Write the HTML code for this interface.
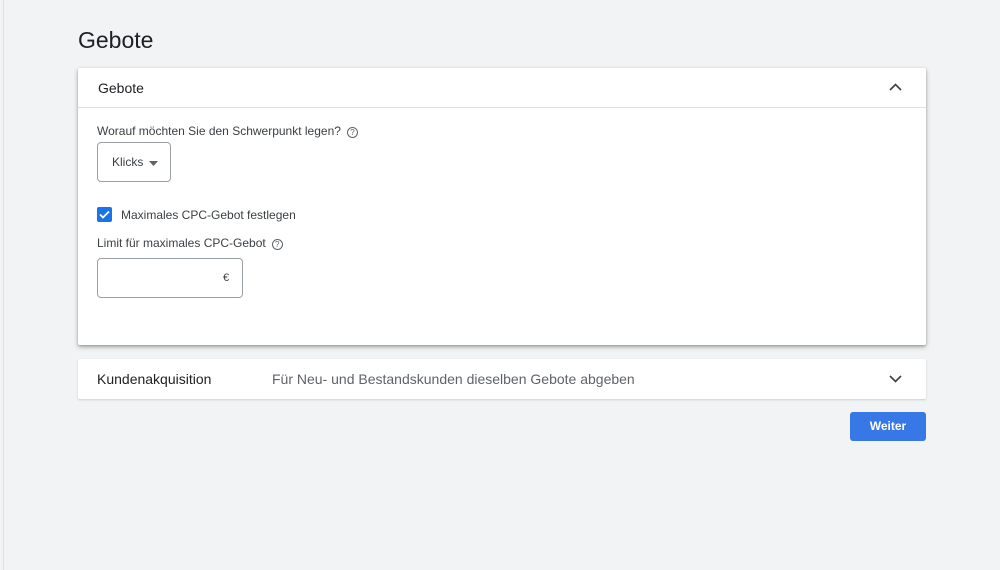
<!DOCTYPE html>
<html><head><meta charset="utf-8"><style>
*{box-sizing:border-box;margin:0;padding:0}
body{width:1000px;height:570px;background:#f1f3f4;font-family:"Liberation Sans",Arial,sans-serif;color:#3c4043;position:relative;overflow:hidden}
.lb{position:absolute;left:3px;top:0;width:1px;height:570px;background:#e0e0e0}
h1{position:absolute;left:78px;top:27px;font-size:23px;font-weight:400;color:#202124}
.card{position:absolute;left:78px;top:68px;width:848px;height:277px;background:#fff;border-radius:2px;box-shadow:0 2px 5px rgba(0,0,0,.3),0 1px 2px rgba(0,0,0,.15)}
.hd{height:40px;border-bottom:1px solid #e0e0e0;padding:12px 20px;font-size:14px;color:#202124;position:relative}
.t{position:absolute;font-size:12px;color:#3c4043}
.q{display:inline-block;width:11px;height:11px;border:1.2px solid #5f6368;border-radius:50%;font-size:8px;text-align:center;line-height:9px;margin-left:6px;vertical-align:0px;color:#5f6368}
.box{position:absolute;border:1px solid #9aa0a6;border-radius:4px}
.card2{position:absolute;left:78px;top:359px;width:848px;height:40px;background:#fff;border-radius:2px;box-shadow:0 1px 2px rgba(0,0,0,.15)}
.btn{position:absolute;left:850px;top:412px;width:76px;height:29px;background:#3878e6;border-radius:3px;color:#fff;font-size:12px;font-weight:bold;text-align:center;line-height:29px}
</style></head><body>
<div class="lb"></div>
<h1>Gebote</h1>
<div class="card">
<div class="hd">Gebote
<svg style="position:absolute;right:24px;top:15px" width="13" height="8" viewBox="0 0 13 8"><path d="M1 7L6.5 1.5 12 7" fill="none" stroke="#3c4043" stroke-width="1.6"/></svg></div>
<div class="t" style="left:19px;top:56px">Worauf möchten Sie den Schwerpunkt legen?<span class="q">?</span></div>
<div class="box" style="left:19px;top:74px;width:74px;height:40px"><span style="position:absolute;left:14px;top:12px;font-size:12px">Klicks</span><svg style="position:absolute;left:51px;top:18px" width="9" height="5"><path d="M0 0h9L4.5 5z" fill="#5f6368"/></svg></div>
<div style="position:absolute;left:19px;top:139px;width:15px;height:15px;background:#1a73e8;border-radius:2px"><svg width="15" height="15"><path d="M3 7.5l3 3 6-6" fill="none" stroke="#fff" stroke-width="1.8"/></svg></div>
<div class="t" style="left:43px;top:140px">Maximales CPC-Gebot festlegen</div>
<div class="t" style="left:19px;top:168px">Limit für maximales CPC-Gebot<span class="q">?</span></div>
<div class="box" style="left:19px;top:190px;width:146px;height:40px"><span style="position:absolute;left:125px;top:13px;font-size:11px">€</span></div>
</div>
<div class="card2">
<span style="position:absolute;left:19px;top:12px;font-size:14px;color:#202124">Kundenakquisition</span>
<span style="position:absolute;left:194px;top:12px;font-size:14px;color:#5f6368">Für Neu- und Bestandskunden dieselben Gebote abgeben</span>
<svg style="position:absolute;right:24px;top:16px" width="13" height="8" viewBox="0 0 13 8"><path d="M1 1l5.5 5.5L12 1" fill="none" stroke="#3c4043" stroke-width="1.6"/></svg>
</div>
<div class="btn">Weiter</div>
</body></html>
